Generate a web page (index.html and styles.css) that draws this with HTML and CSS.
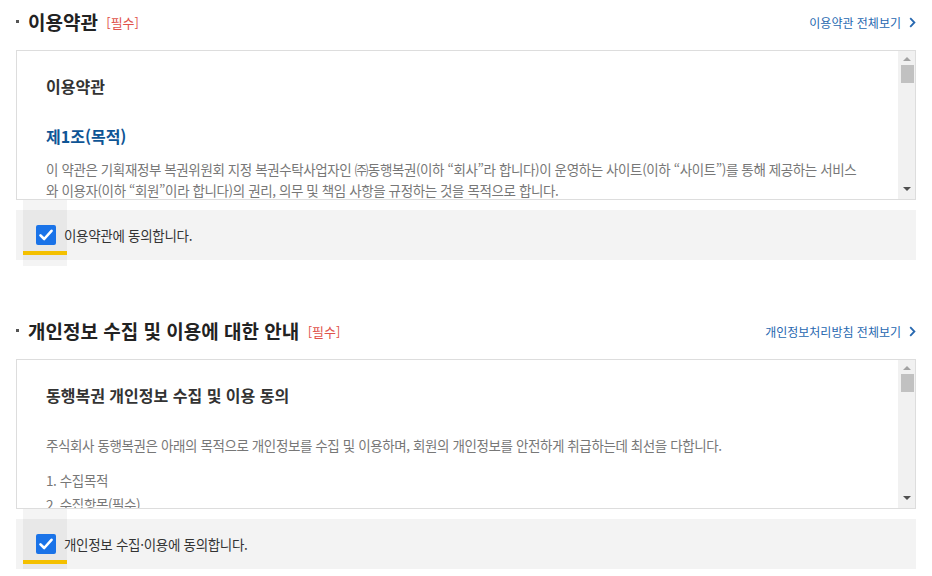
FILE: index.html
```html
<!DOCTYPE html>
<html lang="ko">
<head>
<meta charset="utf-8">
<title>약관 동의</title>
<link rel="stylesheet" href="styles.css">
</head>
<body>
<div class="page">
  <section class="terms">
    <div class="terms-head">
      <h2 class="terms-title"><span class="bullet"></span>이용약관 <em class="req">[필수]</em></h2>
      <a class="more" href="#">이용약관 전체보기 <svg class="chev" width="7" height="11" viewBox="0 0 7 11"><path d="M1.2 1.2 5.4 5.5 1.2 9.8" fill="none" stroke="currentColor" stroke-width="1.8"/></svg></a>
    </div>
    <div class="box">
      <div class="box-content">
        <h3 class="doc-title">이용약관</h3>
        <h4 class="article">제1조(목적)</h4>
        <p class="txt">이 약관은 기획재정부 복권위원회 지정 복권수탁사업자인 ㈜동행복권(이하 “회사”라 합니다)이 운영하는 사이트(이하 “사이트”)를 통해 제공하는 서비스 와 이용자(이하 “회원”이라 합니다)의 권리, 의무 및 책임 사항을 규정하는 것을 목적으로 합니다.</p>
      </div>
      <div class="sbar">
        <span class="arr up"></span>
        <span class="thumb"></span>
        <span class="track"></span>
        <span class="arr down"></span>
      </div>
    </div>
    <label class="agree">
      <span class="focus"></span>
      <span class="chk"><svg width="14" height="12" viewBox="0 0 14 12"><path d="M1.5 6.3 5.2 10 12.5 1.8" fill="none" stroke="#fff" stroke-width="2.6" stroke-linecap="round" stroke-linejoin="round"/></svg></span>
      <span class="agree-txt">이용약관에 동의합니다.</span>
    </label>
  </section>

  <section class="terms">
    <div class="terms-head">
      <h2 class="terms-title"><span class="bullet"></span>개인정보 수집 및 이용에 대한 안내 <em class="req">[필수]</em></h2>
      <a class="more" href="#">개인정보처리방침 전체보기 <svg class="chev" width="7" height="11" viewBox="0 0 7 11"><path d="M1.2 1.2 5.4 5.5 1.2 9.8" fill="none" stroke="currentColor" stroke-width="1.8"/></svg></a>
    </div>
    <div class="box">
      <div class="box-content">
        <h3 class="doc-title">동행복권 개인정보 수집 및 이용 동의</h3>
        <p class="txt intro">주식회사 동행복권은 아래의 목적으로 개인정보를 수집 및 이용하며, 회원의 개인정보를 안전하게 취급하는데 최선을 다합니다.</p>
        <p class="txt item">1. 수집목적</p>
        <p class="txt item">2. 수집항목(필수)</p>
      </div>
      <div class="sbar">
        <span class="arr up"></span>
        <span class="thumb"></span>
        <span class="track"></span>
        <span class="arr down"></span>
      </div>
    </div>
    <label class="agree">
      <span class="focus"></span>
      <span class="chk"><svg width="14" height="12" viewBox="0 0 14 12"><path d="M1.5 6.3 5.2 10 12.5 1.8" fill="none" stroke="#fff" stroke-width="2.6" stroke-linecap="round" stroke-linejoin="round"/></svg></span>
      <span class="agree-txt">개인정보 수집·이용에 동의합니다.</span>
    </label>
  </section>
</div>
</body>
</html>
```

FILE: styles.css
```css
* { box-sizing: border-box; }
html, body { margin: 0; padding: 0; background: #fff; }
body {
  font-family: "Noto Sans CJK KR", "Noto Sans", sans-serif;
  color: #333;
  overflow: hidden;
}
.page { padding: 0 16px; width: 932px; }
.terms + .terms { margin-top: 49px; }
.terms-head {
  height: 42px;
  display: flex;
  align-items: center;
  justify-content: space-between;
  margin-bottom: 8px;
}
.terms-title {
  margin: 0;
  display: flex;
  align-items: center;
  font-size: 19px;
  font-weight: 700;
  color: #222;
  white-space: pre;
}
.bullet {
  width: 3px; height: 3px;
  background: #555;
  margin-right: 9px;
  margin-top: 1px;
}
.req {
  font-style: normal;
  font-weight: 400;
  font-size: 13px;
  color: #e0524a;
  margin-left: 3px;
  margin-top: 2px;
}
.more {
  display: flex;
  align-items: center;
  gap: 8px;
  font-size: 12px;
  color: #2768b0;
  text-decoration: none;
  margin-top: 2px;
}
.chev { color: #2768b0; }
.box {
  height: 150px;
  border: 1px solid #ddd;
  display: flex;
  overflow: hidden;
}
.box-content {
  flex: 1;
  padding: 22px 30px 0 29px;
  overflow: hidden;
}
.doc-title {
  margin: 0;
  font-size: 16px;
  font-weight: 700;
  color: #333;
  line-height: 26px;
}
.article {
  margin: 24px 0 0;
  font-size: 16px;
  font-weight: 700;
  color: #0f5595;
  line-height: 26px;
}
.txt {
  margin: 0;
  font-size: 13.5px;
  color: #777;
  line-height: 21px;
  letter-spacing: -0.4px;
}
.article + .txt { margin-top: 10px; }
.intro { margin-top: 26px; line-height: 22px; }
.item { margin-top: 13px; line-height: 22px; }
.item + .item { margin-top: 2px; }
.sbar {
  width: 17px;
  background: #f1f1f1;
  display: flex;
  flex-direction: column;
  align-items: center;
}
.arr {
  width: 0; height: 0;
  border-left: 4px solid transparent;
  border-right: 4px solid transparent;
}
.arr.up { border-bottom: 4px solid #a3a3a3; margin-top: 6px; }
.arr.down { border-top: 4px solid #505050; margin-bottom: 8px; }
.thumb {
  width: 13px; height: 18px;
  background: #c1c1c1;
  margin-top: 4px;
  margin-left: 1px;
}
.track { flex: 1; }
.agree {
  position: relative;
  margin-top: 10px;
  height: 50px;
  background: #f3f3f3;
  display: flex;
  align-items: center;
  padding-left: 20px;
  gap: 8px;
  cursor: pointer;
}
.focus {
  position: absolute;
  left: 7px;
  top: -10px;
  width: 44px;
  height: 66px;
  background: rgba(0, 0, 0, 0.045);
}
.focus::after {
  content: "";
  position: absolute;
  left: 0; right: 0;
  top: 51px;
  height: 4px;
  background: #f4c000;
}
.chk {
  position: relative;
  width: 20px; height: 20px;
  border-radius: 2px;
  background: #1a73e8;
  display: flex;
  align-items: center;
  justify-content: center;
}
.agree-txt {
  position: relative;
  font-size: 13.5px;
  color: #333;
  letter-spacing: -0.3px;
}
```
